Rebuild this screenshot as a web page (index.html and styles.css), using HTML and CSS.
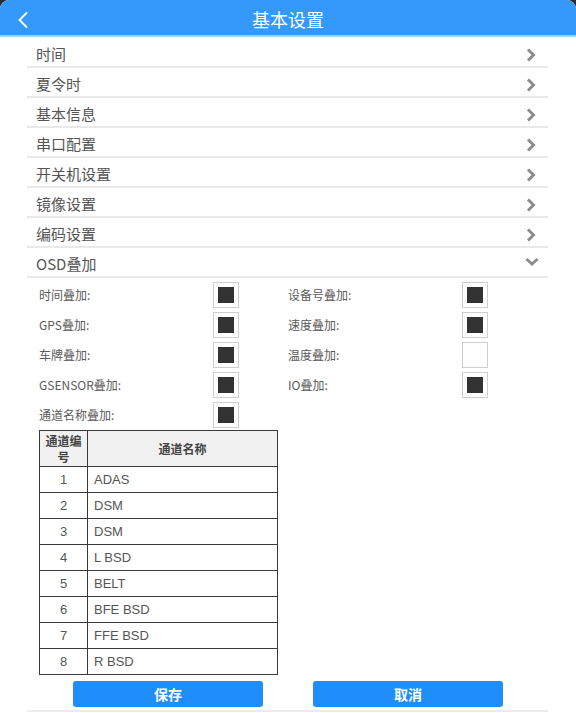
FILE: index.html
```html
<!DOCTYPE html>
<html lang="zh">
<head>
<meta charset="utf-8">
<title>基本设置</title>
<link rel="stylesheet" href="styles.css">
</head>
<body>
<div class="page">
  <header class="topbar">
    <svg class="back" width="12" height="18" viewBox="0 0 12 18"><path d="M10 1.5 L2.5 9 L10 16.5" fill="none" stroke="#fff" stroke-width="1.8"/></svg>
    <h1 class="title">基本设置</h1>
  </header>
  <div class="list">
    <div class="row"><span>时间</span><svg class="chev" width="10" height="14" viewBox="0 0 10 14"><path d="M2 1.5 L7.5 7 L2 12.5" fill="none" stroke="#8c8c8c" stroke-width="3"/></svg></div>
    <div class="row"><span>夏令时</span><svg class="chev" width="10" height="14" viewBox="0 0 10 14"><path d="M2 1.5 L7.5 7 L2 12.5" fill="none" stroke="#8c8c8c" stroke-width="3"/></svg></div>
    <div class="row"><span>基本信息</span><svg class="chev" width="10" height="14" viewBox="0 0 10 14"><path d="M2 1.5 L7.5 7 L2 12.5" fill="none" stroke="#8c8c8c" stroke-width="3"/></svg></div>
    <div class="row"><span>串口配置</span><svg class="chev" width="10" height="14" viewBox="0 0 10 14"><path d="M2 1.5 L7.5 7 L2 12.5" fill="none" stroke="#8c8c8c" stroke-width="3"/></svg></div>
    <div class="row"><span>开关机设置</span><svg class="chev" width="10" height="14" viewBox="0 0 10 14"><path d="M2 1.5 L7.5 7 L2 12.5" fill="none" stroke="#8c8c8c" stroke-width="3"/></svg></div>
    <div class="row"><span>镜像设置</span><svg class="chev" width="10" height="14" viewBox="0 0 10 14"><path d="M2 1.5 L7.5 7 L2 12.5" fill="none" stroke="#8c8c8c" stroke-width="3"/></svg></div>
    <div class="row"><span>编码设置</span><svg class="chev" width="10" height="14" viewBox="0 0 10 14"><path d="M2 1.5 L7.5 7 L2 12.5" fill="none" stroke="#8c8c8c" stroke-width="3"/></svg></div>
    <div class="row"><span>OSD叠加</span><svg class="chev-down" width="14" height="10" viewBox="0 0 14 10"><path d="M1.5 2 L7 7 L12.5 2" fill="none" stroke="#8c8c8c" stroke-width="3"/></svg></div>

    <div class="osd">
      <div class="opt"><span class="lbl">时间叠加:</span><span class="cb on"></span></div>
      <div class="opt"><span class="lbl">设备号叠加:</span><span class="cb on"></span></div>
      <div class="opt"><span class="lbl">GPS叠加:</span><span class="cb on"></span></div>
      <div class="opt"><span class="lbl">速度叠加:</span><span class="cb on"></span></div>
      <div class="opt"><span class="lbl">车牌叠加:</span><span class="cb on"></span></div>
      <div class="opt"><span class="lbl">温度叠加:</span><span class="cb"></span></div>
      <div class="opt"><span class="lbl">GSENSOR叠加:</span><span class="cb on"></span></div>
      <div class="opt"><span class="lbl">IO叠加:</span><span class="cb on"></span></div>
      <div class="opt"><span class="lbl">通道名称叠加:</span><span class="cb on"></span></div>
    </div>

    <table class="chan">
      <thead>
        <tr><th class="c1">通道编号</th><th>通道名称</th></tr>
      </thead>
      <tbody>
        <tr><td class="c1">1</td><td>ADAS</td></tr>
        <tr><td class="c1">2</td><td>DSM</td></tr>
        <tr><td class="c1">3</td><td>DSM</td></tr>
        <tr><td class="c1">4</td><td>L BSD</td></tr>
        <tr><td class="c1">5</td><td>BELT</td></tr>
        <tr><td class="c1">6</td><td>BFE BSD</td></tr>
        <tr><td class="c1">7</td><td>FFE BSD</td></tr>
        <tr><td class="c1">8</td><td>R BSD</td></tr>
      </tbody>
    </table>

    <div class="actions">
      <button class="btn">保存</button>
      <button class="btn">取消</button>
    </div>
  </div>
</div>
</body>
</html>
```

FILE: styles.css
```css
html {
  background: #2b2b2b;
}
body {
  margin: 0;
  font-family: "Noto Sans CJK SC", "Noto Sans", sans-serif;
  color: #555;
}
.page {
  background: #fff;
  border-radius: 9px 9px 0 0;
  min-height: 713px;
  overflow: hidden;
}
.topbar {
  height: 35px;
  background: #3598fb;
  border-bottom: 2px solid #a9d2f8;
  display: flex;
  align-items: center;
  justify-content: center;
  position: relative;
}
.back {
  position: absolute;
  left: 17px;
  top: 11px;
}
.title {
  margin: 0;
  padding-top: 3px;
  font-size: 18px;
  font-weight: normal;
  color: #fff;
  line-height: 24px;
}
.list {
  margin: 0 28px 0 27px;
  padding-top: 1px;
  border-bottom: 2px solid #ececec;
  padding-bottom: 1px;
}
.row {
  height: 30px;
  box-sizing: border-box;
  border-bottom: 2px solid #e9e9e9;
  padding: 2px 12px 0 9px;
  display: flex;
  align-items: center;
  justify-content: space-between;
  font-size: 15px;
  color: #555;
}
.row span {
  line-height: 25px;
}
.chev {
  margin-top: 3px;
}
.chev-down {
  margin-right: -3px;
  margin-top: -2px;
}
.osd {
  display: grid;
  grid-template-columns: 249px 249px;
  row-gap: 4px;
  padding: 4px 0 0 12px;
}
.opt {
  display: flex;
  align-items: center;
  height: 26px;
}
.lbl {
  width: 174px;
  font-size: 12px;
  color: #5a5a5a;
  margin-top: -2px;
}
.cb {
  width: 16px;
  height: 16px;
  border: 1px solid #cfcfcf;
  padding: 4px;
  background: #fff;
  background-clip: content-box;
}
.cb.on {
  background: #333;
  background-clip: content-box;
}
.chan {
  margin: 2px 0 0 12px;
  width: 239px;
  border-collapse: collapse;
  font-family: "Liberation Sans", Arial, sans-serif;
  font-size: 13px;
  color: #555;
}
.chan th,
.chan td {
  border: 1px solid #3a3a3a;
}
.chan th {
  background: #f1f1f1;
  font-family: "Noto Sans CJK SC", sans-serif;
  font-size: 12px;
  font-weight: bold;
  color: #444;
  height: 35px;
  padding: 0;
  line-height: 16px;
}
.chan th.c1 {
  padding: 0 4px;
}
.chan .c1 {
  width: 48px;
  box-sizing: border-box;
  text-align: center;
}
.chan td {
  height: 25px;
  padding: 0 0 0 6px;
}
.chan td.c1 {
  padding: 0;
}
.actions {
  display: flex;
  justify-content: center;
  gap: 50px;
  margin: 6px 0 2px;
  padding-left: 1px;
}
.btn {
  width: 190px;
  height: 26px;
  border: none;
  border-radius: 3px;
  background: #1f8efa;
  color: #fff;
  font-family: "Noto Sans CJK SC", sans-serif;
  font-size: 14px;
  font-weight: bold;
  padding: 0;
}
```
